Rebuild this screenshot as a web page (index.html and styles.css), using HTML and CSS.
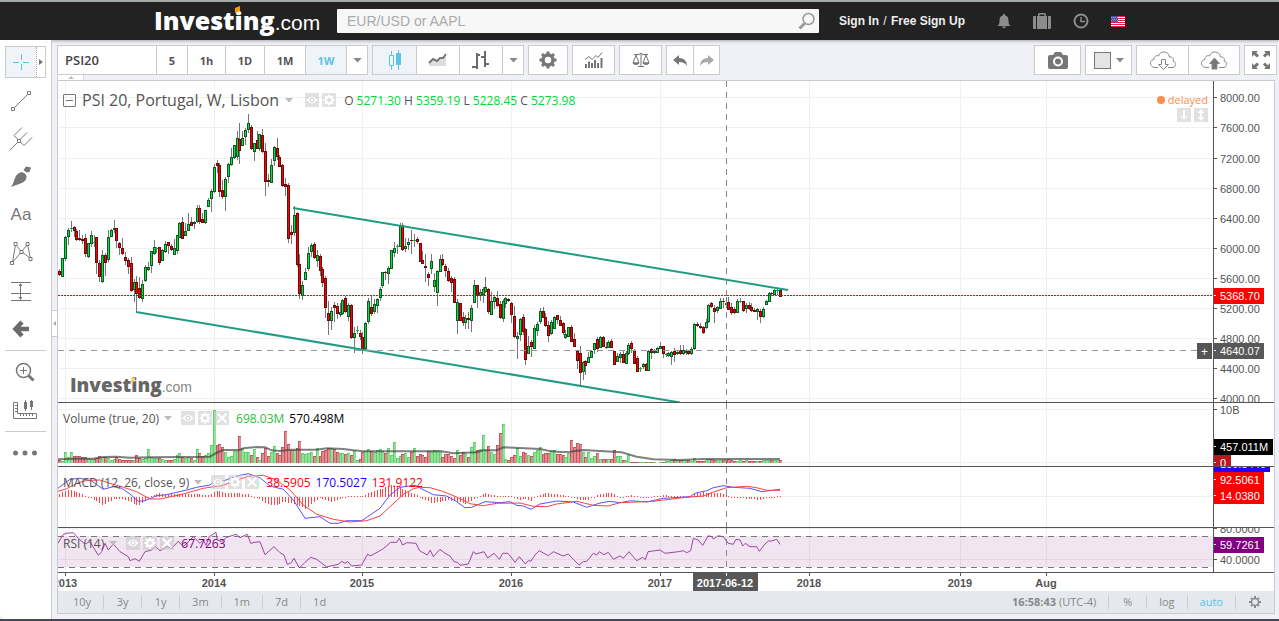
FILE: index.html
```
<!DOCTYPE html>
<html lang="en">
<head>
  <meta charset="UTF-8">
  <meta name="viewport" content="width=device-width, initial-scale=1.0">
  <title>PSI 20 - Investing.com</title>
  <link rel="stylesheet" href="styles.css">
</head>
<body>
  <svg class="symbols" aria-hidden="true">
    <symbol id="eye" viewBox="0 0 14 14"><path d="M1.5 7Q7 0 12.500 7Q7 14 1.500 7z" fill="#fff"/><circle cx="7" cy="7" r="2.600" fill="#ddd"/><circle cx="7" cy="7" r="1.200" fill="#fff"/></symbol>
    <symbol id="cog" viewBox="0 0 14 14"><circle cx="7" cy="7" r="3.200" fill="none" stroke="#fff" stroke-width="2.200"/><path d="M7 1.500v11M1.500 7h11M3.100 3.100l7.800 7.800M10.900 3.100l-7.800 7.800" stroke="#fff" stroke-width="2"/><circle cx="7" cy="7" r="2" fill="#ddd"/></symbol>
    <symbol id="cross" viewBox="0 0 14 14"><path d="M2.500 2.500l9 9M11.500 2.500l-9 9" stroke="#fff" stroke-width="2"/></symbol>
    <symbol id="caret" viewBox="0 0 10 6"><path d="M0 0h10L5 5.500z" fill="currentColor"/></symbol>
  </svg>

  <header class="header">
    <a class="logo" href="#"><span class="logo-name">Investing</span><span class="logo-com">.com</span></a>
    <form class="search-box">
      <input type="text" placeholder="EUR/USD or AAPL" aria-label="Search">
      <button class="search-btn" aria-label="Go">
        <svg width="18" height="18" viewBox="0 0 18 18" fill="none" stroke="#999"><circle cx="10.500" cy="7" r="5.500" stroke-width="1.500"/><path d="M6.500 11.500L1.500 16.500" stroke-width="3"/></svg>
      </button>
    </form>
    <div class="sign-links"><a href="#">Sign In</a><span> / </span><a href="#">Free Sign Up</a></div>
    <nav class="header-icons">
      <a href="#" aria-label="Alerts"><svg width="14" height="16" viewBox="0 0 14 16" fill="#8c8c8c"><path d="M6 1h2v1.500c3 .5 3.500 3 3.500 6 0 2.500 1 3 2 4.500H.5c1-1.500 2-2 2-4.500 0-3 .5-5.500 3.500-6zM5 13.500h4c0 2-4 2-4 0z"/></svg></a>
      <a href="#" aria-label="Portfolio"><svg width="18" height="16" viewBox="0 0 18 16" fill="#8c8c8c"><path d="M1 3h2v13H1a1 1 0 0 1-1-1V4a1 1 0 0 1 1-1zM4 3h1V1.500Q5 0 6.500 0h5Q13 0 13 1.500V3h1v13H4zM6.500 3h5V1.500h-5zM15 3h2a1 1 0 0 1 1 1v11a1 1 0 0 1-1 1h-2z" fill-rule="evenodd"/></svg></a>
      <a href="#" aria-label="Recent"><svg width="16" height="16" viewBox="0 0 16 16" fill="none" stroke="#8c8c8c"><circle cx="8" cy="8" r="6.500" stroke-width="2"/><path d="M8 4v4.500h4" stroke-width="1.500"/></svg></a>
      <a href="#" aria-label="United States"><svg width="14" height="11" viewBox="0 0 14 11"><path fill="#fff" d="M0 0h14v11H0z"/><path stroke="#e0243c" d="M0 .5h14M0 2.500h14M0 4.500h14M0 6.500h14M0 8.500h14M0 10.500h14"/><path fill="#4a4f9c" d="M0 0h7v6H0z"/><path stroke="#c9cbe8" stroke-width=".7" stroke-dasharray="1 1" d="M0 1.500h7M1 3.200h6M0 4.800h7"/></svg></a>
    </nav>
  </header>

  <div class="workspace">
    <aside class="tools">
      <div class="tool-active">
        <button aria-label="Crosshair"><svg width="18" height="18" viewBox="0 0 18 18" stroke="#5bc4e6"><path d="M9.500 1v6M9.500 11v6M1 9.500h6M11 9.500h6"/></svg></button>
        <button class="tool-more" aria-label="Cursors"><svg width="4" height="6" viewBox="0 0 4 6"><path d="M0 0l4 3-4 3z" fill="#777"/></svg></button>
      </div>
      <button aria-label="Trend line"><svg width="22" height="22" viewBox="0 0 22 22" fill="none" stroke="#777"><path d="M3.500 18.500L18.500 3.500"/><path fill="#fff" d="M1.500 17.500h3v3h-3zM17.500 1.500h3v3h-3z"/></svg></button>
      <button aria-label="Pitchfork"><svg width="24" height="24" viewBox="0 0 24 24" fill="none" stroke="#777"><path d="M1 23l9-9M5 8.500l10 10M5 8.500l8-8M10 13.500l8-8M15 18.500l8-8"/><path fill="#fff" d="M8.500 12.500h3v3h-3z"/></svg></button>
      <button aria-label="Brush"><svg width="22" height="22" viewBox="0 0 22 22" fill="#777"><path d="M1 21C5 16 4 9 10 6.500c3-1 7 1.500 6.500 5C16 17 8 18 1 21zM13.500 4l2.500-3.500 5 1-1.500 4.500-3 .5z"/></svg></button>
      <button class="tool-text" aria-label="Text">Aa</button>
      <button aria-label="Pattern"><svg width="24" height="24" viewBox="0 0 24 24" fill="none" stroke="#777"><path d="M3.500 21.500L6.500 3.500l6 7 6-7 3 14-9-7z"/><path fill="#fff" d="M1.500 20.500h3v3h-3zM5 1.500h3v3H5zM11 9.500h3v3h-3zM17 1.500h3v3h-3zM20 16.500h3v3h-3z"/></svg></button>
      <button aria-label="Measure"><svg width="20" height="20" viewBox="0 0 20 20" stroke="#777" fill="#777"><path d="M0 1.500h20M0 12.500h20M0 19.500h20M9.500 3v15" /><path d="M9.500 2l2 3h-4zM9.500 19l2-3h-4z" stroke="none"/></svg></button>
      <button aria-label="Back"><svg width="18" height="18" viewBox="0 0 18 18" fill="none" stroke="#6b6b6b" stroke-width="4.500"><path d="M10 2L3.500 9l6.500 7M4 9h13"/></svg></button>
      <hr>
      <button class="tool-offset" aria-label="Zoom in"><svg width="20" height="20" viewBox="0 0 20 20" fill="none" stroke="#777"><circle cx="8.500" cy="8.500" r="7" stroke-width="1.500"/><path d="M8.500 5v7M5 8.500h7"/><path d="M13.500 13.500l5 5" stroke-width="3"/></svg></button>
      <button class="tool-offset" aria-label="Scale"><svg width="24" height="20" viewBox="0 0 24 20" fill="none" stroke="#777"><path d="M.5 2.500h4v11h19v5H.5zM2 5.500h2.500M2 8.500h2.500M2 11.500h2.500M7.500 16v-2M10.500 16v-2M13.500 16v-2M16.500 16v-2M19.500 16v-2"/><path d="M12.500 0v11M18.500 0v10"/><path fill="#777" stroke="none" d="M11 2h3v7h-3zM17 1h3v6h-3z"/></svg></button>
      <hr>
      <button class="tool-offset" aria-label="More"><svg width="24" height="6" viewBox="0 0 24 6" fill="#777"><circle cx="2.500" cy="3" r="2.500"/><circle cx="12" cy="3" r="2.500"/><circle cx="21.500" cy="3" r="2.500"/></svg></button>
    </aside>

    <main class="content">
      <button class="side-handle" aria-label="Hide tools"><svg width="3" height="5" viewBox="0 0 3 5"><path d="M3 0v5L0 2.500z" fill="#aaa"/></svg></button>
      <div class="toolbar">
        <div class="group">
          <input class="symbol-input" type="text" value="PSI20" aria-label="Symbol">
          <button>5</button>
          <button class="w-hour">1h</button>
          <button class="w-day">1D</button>
          <button class="w-month">1M</button>
          <button class="w-month active">1W</button>
          <button class="w-caret" aria-label="Intervals"><svg width="9" height="5"><use href="#caret"/></svg></button>
        </div>
        <div class="group">
          <button class="w-icon active" aria-label="Candles"><svg width="14" height="20" viewBox="0 0 14 20" stroke="#5bc4e6" fill="none"><path d="M3.500 1v4M3.500 16v4M10.500 0v20"/><path d="M1.500 5.500h4v10h-4z"/><path fill="#5bc4e6" d="M8.500 3.500h4v11h-4z"/></svg></button>
          <button class="w-icon" aria-label="Area"><svg width="20" height="14" viewBox="0 0 20 14"><path fill="#ddd" d="M1 9l5-3 3 2 9-6v11H1z"/><path fill="none" stroke="#777" stroke-width="2" d="M1 10l4-4 4 2 3-3h3l3-4"/></svg></button>
          <button class="w-icon" aria-label="Bars"><svg width="18" height="18" viewBox="0 0 18 18" fill="none" stroke="#6b6b6b" stroke-width="2"><path d="M5 2v16M0 16h5M5 4h3M13 0v16M9 6h4M13 13h4"/></svg></button>
          <button class="w-caret" aria-label="Chart types"><svg width="9" height="5"><use href="#caret"/></svg></button>
        </div>
        <div class="group">
          <button class="w-gear" aria-label="Properties"><svg width="18" height="18" viewBox="0 0 18 18" fill="none" stroke="#777"><circle cx="9" cy="9" r="5" stroke-width="3.500"/><path stroke-width="3" d="M9 .5v3M9 14.500v3M.5 9h3M14.500 9h3M3 3l2 2M13 13l2 2M15 3l-2 2M5 13l-2 2"/></svg></button>
        </div>
        <div class="group">
          <button class="w-wide" aria-label="Indicators"><svg width="18" height="16" viewBox="0 0 18 16" fill="none" stroke="#777"><path stroke-width="2" d="M1 16v-4M4 16V9.500M7 16v-5M10 16V8M13 16v-5M16.500 16V6"/><path d="M0 7.500l4-3 3 3 4-4 2 2 4-5"/></svg></button>
        </div>
        <div class="group">
          <button class="w-wide" aria-label="Compare"><svg width="18" height="16" viewBox="0 0 18 16" fill="none" stroke="#777"><path d="M2 2.500h5M11 2.500h5M7 2.500l2-1.500 2 1.500M9 2v12M6 14.500h6M4 3L1 11h6L4 3zM14 3l-3 8h6l-3-8z"/><path fill="#777" d="M1 11c1 2 5 2 6 0zM11 11c1 2 5 2 6 0z"/></svg></button>
        </div>
        <div class="group">
          <button class="w-undo" aria-label="Undo"><svg width="14" height="11" viewBox="0 0 14 11" fill="#777"><path d="M0 5l6-5v3c5 0 8 3 8 8-2-3-4-4-8-4v3z"/></svg></button>
          <button class="w-undo" aria-label="Redo"><svg width="14" height="11" viewBox="0 0 14 11" fill="#aaa"><path d="M14 5L8 0v3C3 3 0 6 0 11c2-3 4-4 8-4v3z"/></svg></button>
        </div>
        <div class="group push">
          <button class="w-camera" aria-label="Snapshot"><svg width="20" height="17" viewBox="0 0 20 17"><path fill="#777" d="M2 3h3l2-3h6l2 3h3a2 2 0 0 1 2 2v10a2 2 0 0 1-2 2H2a2 2 0 0 1-2-2V5a2 2 0 0 1 2-2z"/><circle cx="10" cy="9.500" r="4" fill="#777" stroke="#fff" stroke-width="2"/></svg></button>
        </div>
        <div class="group">
          <button class="w-camera layout-btn" aria-label="Layout"><span class="swatch"></span><svg width="8" height="5"><use href="#caret"/></svg></button>
        </div>
        <div class="group">
          <button class="w-cloud" aria-label="Load"><svg width="28" height="20" viewBox="0 0 28 20" fill="none" stroke="#888"><path d="M9 17.500H6C0 17 0 10 5 9.500 5 6 8 5 9.500 6 11 0 20 1 20.500 7 24 6.500 25 9 24 11c4 1 3 6 0 6.500h-5"/><path d="M12.500 9.500h4v5h3l-5 5-5-5h3z"/></svg></button>
          <button class="w-cloud" aria-label="Save"><svg width="28" height="20" viewBox="0 0 28 20" fill="none" stroke="#888"><path d="M9 17.500H6C0 17 0 10 5 9.500 5 6 8 5 9.500 6 11 0 20 1 20.500 7 24 6.500 25 9 24 11c4 1 3 6 0 6.500h-5"/><path fill="#777" d="M12 19v-5.500H9.500l5-5.500 5 5.500H17V19z"/></svg></button>
        </div>
        <div class="group">
          <button class="w-full" aria-label="Fullscreen"><svg width="18" height="18" viewBox="0 0 18 18" fill="#777"><path d="M0 0h6L4.300 1.700 7 4.500 5 6.500 2 3.800 0 6zM18 0v6l-2-2.200-3 2.700-2-2L13.700 1.700 12 0zM0 18v-6l2 2.200 3-2.700 2 2-2.700 2.800L6 18zM18 18h-6l1.700-1.700-2.700-2.800 2-2 3 2.700 2-2.200z"/></svg></button>
        </div>
        <button class="fold" aria-label="Hide toolbar"><svg width="6" height="3" viewBox="0 0 6 3"><path d="M3 0l3 3H0z" fill="#bbb"/></svg></button>
      </div>

      <section class="chart">
        <div class="pane pane-price">
          <div class="plot">
            <svg id="price"></svg>
            <div class="legend legend-main">
              <button class="minus" aria-label="Collapse"></button>
              <h1>PSI 20, Portugal, W, Lisbon</h1>
              <svg class="legend-caret" width="8" height="5"><use href="#caret"/></svg>
              <span class="chips"><svg><use href="#eye"/></svg><svg><use href="#cog"/></svg></span>
              <span class="ohlc">O <b>5271.30</b> H <b>5359.19</b> L <b>5228.45</b> C <b>5273.98</b></span>
            </div>
            <div class="delayed">
              <span>delayed</span>
              <div class="chips">
                <svg viewBox="0 0 14 14"><path d="M7 2v7" stroke="#fff" stroke-width="2"/><path d="M3.500 8h7L7 12z" fill="#fff"/></svg>
                <svg viewBox="0 0 14 14"><path d="M7 3v8" stroke="#fff" stroke-width="2"/><path d="M3.500 5h7L7 1zM3.500 9h7L7 13z" fill="#fff"/></svg>
              </div>
            </div>
            <div class="watermark"><span class="logo-name">Investing</span><span class="logo-com">.com</span></div>
            <button class="add-alert" aria-label="Add alert">+</button>
          </div>
          <svg class="axis" id="price-axis"></svg>
        </div>
        <div class="pane pane-volume">
          <div class="plot">
            <svg id="volume"></svg>
            <div class="legend">
              <h2>Volume (true, 20)</h2>
              <svg class="legend-caret" width="8" height="5"><use href="#caret"/></svg>
              <span class="chips"><svg><use href="#eye"/></svg><svg><use href="#cog"/></svg><svg><use href="#cross"/></svg></span>
              <span class="up">698.03M</span><span class="black">570.498M</span>
            </div>
          </div>
          <svg class="axis" id="volume-axis"></svg>
        </div>
        <div class="pane pane-macd">
          <div class="plot">
            <svg id="macd"></svg>
            <div class="legend">
              <h2>MACD (12, 26, close, 9)</h2>
              <svg class="legend-caret" width="8" height="5"><use href="#caret"/></svg>
              <span class="chips"><svg><use href="#eye"/></svg><svg><use href="#cog"/></svg><svg><use href="#cross"/></svg></span>
              <span class="red">38.5905</span><span class="blue">170.5027</span><span class="red">131.9122</span>
            </div>
          </div>
          <svg class="axis" id="macd-axis"></svg>
        </div>
        <div class="pane pane-rsi">
          <div class="plot">
            <svg id="rsi"></svg>
            <div class="legend">
              <h2>RSI (14)</h2>
              <svg class="legend-caret" width="8" height="5"><use href="#caret"/></svg>
              <span class="chips"><svg><use href="#eye"/></svg><svg><use href="#cog"/></svg><svg><use href="#cross"/></svg></span>
              <span class="purple">67.7263</span>
            </div>
          </div>
          <svg class="axis" id="rsi-axis"></svg>
        </div>
        <svg class="time-axis" id="time"></svg>
        <div class="bottom-bar">
          <button>10y</button><button>3y</button><button>1y</button><button>3m</button><button>1m</button><button>7d</button><button>1d</button>
          <span class="clock"><b>16:58:43</b> (UTC-4)</span>
          <button>%</button><button>log</button><button class="active">auto</button>
          <button aria-label="Scale settings"><svg width="12" height="12" viewBox="0 0 12 12" fill="none" stroke="#888"><circle cx="6" cy="6" r="3.500" stroke-width="1.500"/><path stroke-width="2" d="M6 0v2M6 10v2M0 6h2M10 6h2M2 2l1 1M9 9l1 1M10 2L9 3M3 9l-1 1"/></svg></button>
        </div>
      </section>
    </main>
  </div>
  <script src="chart.js"></script>
</body>
</html>
```
FILE: styles.css
```
* {
  margin: 0;
  padding: 0;
  box-sizing: border-box;
}

body {
  display: flex;
  flex-direction: column;
  min-height: 100vh;
  background-color: #f0f1f6;
  border-top: 2px solid #a3aaa8;
  border-bottom: 2px solid #444857;
  font-family: "Open Sans", "Noto Sans", sans-serif;
  font-size: 12px;
  color: #555;
}

button, input {
  font: inherit;
  color: inherit;
  border: none;
  background: none;
}

button {
  display: flex;
  align-items: center;
  justify-content: center;
  cursor: pointer;
}

a {
  color: inherit;
  text-decoration: none;
}

svg {
  display: block;
  flex-shrink: 0;
}

.symbols {
  position: absolute;
  width: 0;
  height: 0;
}

/* header */
.header {
  display: flex;
  align-items: center;
  height: 38px;
  padding-left: 154px;
  background-color: #222;
  color: #eee;
  box-shadow: 0 1px 3px rgba(0, 0, 0, 0.3);
}

.logo {
  display: flex;
  align-items: baseline;
  width: 183px;
  color: #fff;
  line-height: 34px;
}

.logo-name {
  position: relative;
  font-size: 25px;
  font-weight: 800;
}

.logo-name::after {
  content: "";
  position: absolute;
  left: 67%;
  top: 14%;
  width: 5px;
  height: 5px;
  background-color: #f90;
  transform: skewY(-20deg);
}

.logo-com {
  font-family: "Liberation Sans", Arial, sans-serif;
  font-size: 21px;
}

.search-box {
  display: flex;
  align-items: center;
  width: 482px;
  height: 24px;
  padding-right: 3px;
  background-color: #f7f7f7;
  border-radius: 1px;
}

.search-box input {
  flex: 1;
  padding-left: 10px;
  font-family: "Liberation Sans", Arial, sans-serif;
  font-size: 14px;
  outline: none;
}

.search-box input::placeholder {
  color: #aaa;
}

.sign-links {
  display: flex;
  gap: 1px;
  margin-left: 20px;
  font-family: "Liberation Sans", Arial, sans-serif;
  font-size: 12px;
  font-weight: bold;
  white-space: pre;
}

.sign-links span {
  font-weight: normal;
}

.header-icons {
  display: flex;
  align-items: center;
  gap: 22px;
  margin-left: 32px;
}

/* left tools */
.workspace {
  display: flex;
  flex: 1;
}

.tools {
  display: flex;
  flex-direction: column;
  width: 52px;
  padding: 6px 5px 0;
  background-color: #fff;
  border-right: 1px solid #c9cbd1;
  border-bottom-left-radius: 6px;
}

.tools button {
  width: 32px;
  height: 38px;
}

.tools .tool-active {
  display: flex;
  height: 32px;
  margin-bottom: 4px;
  border: 1px solid #c9cbcd;
}

.tool-active button {
  height: 30px;
  background-color: #f0f4f8;
}

.tools .tool-more {
  width: 9px;
  background-color: #fff;
  border-left: 1px dotted #aaa;
}

.tools .tool-text {
  font-family: "Liberation Sans", Arial, sans-serif;
  font-size: 17px;
  color: #777;
}

.tools .tool-offset {
  margin-left: 4px;
}

.tools hr {
  margin: 2px 0;
  border: none;
  border-top: 1px solid #ccc;
}

/* toolbar */
.content {
  display: flex;
  flex: 1;
  flex-direction: column;
  min-width: 0;
  padding: 5px 4px 5px 5px;
  position: relative;
}

.side-handle {
  position: absolute;
  left: 0;
  top: 270px;
  width: 5px;
  height: 27px;
  background-color: #fff;
  border: solid #c9cbd1;
  border-width: 1px 0;
}

.toolbar {
  display: flex;
  gap: 4px;
  margin: 0 -2px 5px 0;
  position: relative;
}

.group {
  display: flex;
  height: 30px;
  background-color: #fff;
  border: 1px solid #c9cbcd;
}

.group button {
  width: 31px;
  font-size: 11px;
  font-weight: 700;
}

.group button + button,
.symbol-input + button {
  border-left: 1px solid #c9cbcd;
}

.group .symbol-input {
  width: 98px;
  padding-left: 7px;
  font-size: 13px;
  font-weight: 600;
  color: #444;
}

.group .w-hour { width: 38px; }
.group .w-day { width: 39px; }
.group .w-month { width: 41px; }
.group .w-icon { width: 43px; }
.group .w-caret { width: 21px; color: #888; }
.group .w-gear { width: 38px; }
.group .w-wide { width: 41px; }
.group .w-camera { width: 45px; }
.group .w-undo { width: 26px; }
.group .w-cloud { width: 51px; }
.group .w-full { width: 31px; }

.group .active {
  background-color: #f0f4f8;
  color: #5bc4e6;
}

.push {
  margin-left: auto;
}

.layout-btn {
  gap: 5px;
  color: #888;
}

.swatch {
  width: 17px;
  height: 17px;
  background-color: #e4e4e4;
  border: 1px solid #777;
}

.fold {
  position: absolute;
  left: 0;
  top: 30px;
  width: 27px;
  height: 5px;
  background-color: #fff;
  border: solid #d3d5da;
  border-width: 0 1px;
}

/* chart */
.chart {
  display: flex;
  flex: 1;
  flex-direction: column;
  background-color: #fff;
  border: 1px solid #c9cbcd;
}

.pane {
  display: flex;
  border-bottom: 1px solid #555;
}

.pane-price {
  flex: 1;
  min-height: 322px;
}

.pane-volume { height: 64px; }
.pane-macd { height: 61px; }
.pane-rsi { height: 45px; }

.plot {
  flex: 1;
  min-width: 0;
  position: relative;
  overflow: hidden;
}

.plot > svg {
  position: absolute;
  width: 100%;
  height: 100%;
}

.axis {
  width: 61px;
  height: auto;
  border-left: 1px solid #555;
  overflow: hidden;
}

.axis text,
.time-axis text {
  font-family: "Liberation Sans", Arial, sans-serif;
  font-size: 11px;
  fill: #555;
}

.axis .badge-text,
.time-axis .badge-text {
  fill: #fff;
}

.time-axis {
  width: 100%;
  height: 18px;
  overflow: hidden;
}

.time-axis text {
  font-weight: bold;
  text-anchor: middle;
}

.legend {
  position: absolute;
  left: 5px;
  top: 7px;
  display: flex;
  align-items: center;
  gap: 5px;
  height: 16px;
  white-space: nowrap;
}

.legend h1 {
  font-size: 16px;
  font-weight: normal;
}

.legend h2 {
  font-size: 12px;
  font-weight: normal;
}

.legend-main {
  top: 10px;
  gap: 6px;
  height: 18px;
}

.legend-caret {
  color: #bbb;
}

.minus {
  width: 13px;
  height: 13px;
  background: linear-gradient(#777, #777) center / 7px 1px no-repeat;
  border: 1px solid #777;
  border-radius: 1px;
}

.chips {
  display: flex;
  gap: 3px;
  margin: 0 2px 0 4px;
}

.legend-main .chips {
  margin-left: 6px;
}

.chips svg {
  width: 14px;
  height: 14px;
  background-color: rgba(200, 200, 200, 0.55);
}

.ohlc b {
  font-weight: normal;
  color: #00d936;
}

.up { color: #2ebd3d; }
.black { color: #000; }
.red { color: #f00; }
.blue { color: #20f; }
.purple { color: #800080; }

.delayed {
  position: absolute;
  right: 5px;
  top: 11px;
  display: flex;
  flex-direction: column;
  align-items: flex-end;
  font-size: 11px;
  line-height: 16px;
  color: #ff8c4a;
}

.delayed span::before {
  content: "";
  display: inline-block;
  width: 8px;
  height: 8px;
  margin-right: 3px;
  background-color: #ff8c4a;
  border-radius: 50%;
}

.delayed .chips {
  margin: 0;
}

.watermark {
  position: absolute;
  left: 12px;
  bottom: 4px;
  display: flex;
  align-items: baseline;
  color: #666;
}

.watermark .logo-name {
  font-size: 19px;
}

.watermark .logo-name::after {
  top: 22%;
  width: 4px;
  height: 4px;
  background-color: #fc6;
}

.watermark .logo-com {
  font-size: 14px;
  color: #888;
}

.add-alert {
  position: absolute;
  right: 1px;
  top: 262px;
  width: 15px;
  height: 16px;
  background-color: #555;
  color: #fff;
}

/* bottom bar */
.bottom-bar {
  display: flex;
  align-items: center;
  height: 22px;
  padding: 0 1px 1px 3px;
  background-color: #e5e8ec;
  font-size: 11px;
  color: #888;
}

.bottom-bar button {
  height: 14px;
  min-width: 38px;
  padding: 0 12px;
}

.bottom-bar button + button {
  border-left: 1px solid #cbced3;
}

.clock {
  margin-left: auto;
  padding-right: 12px;
}

.clock b {
  font-weight: 700;
}

.clock + button {
  border-left: 1px solid #cbced3;
}

.bottom-bar .active {
  color: #5bc4e6;
}
```
FILE: chart.js
```
// Rows are "high top bottom low" plus g/r, in thirds of a pixel below `top`.
const CANDLES = [
  { top: 100, rows: `
508 513 525 528 r,474 475 530 530 g,408 412 476 482 g,384 391 411 435 g,363 385 388 395 g,378 382 392 412 r,387 392 419 424 r,
391 415 419 424 r,405 418 422 432 r,402 415 461 472 r,430 430 470 474 g,393 406 432 440 g,404 427 430 440 g,411 411 489 521 r,
480 489 530 545 r,450 465 545 548 g,460 465 489 527 r,390 411 480 486 g,388 391 411 411 g,360 385 391 398 g,384 385 422 445 r,
426 430 443 465 r,414 443 462 465 r,455 472 483 496 r,474 481 500 523 r,470 489 572 575 r,538 547 570 605 g,528 547 582 640 r,
531 563 594 596 r,540 553 597 605 g,495 502 543 545 g,486 500 510 514 g,452 454 498 520 g,420 442 461 465 g,441 443 446 460 g,
441 442 490 495 r,447 451 482 482 g,423 433 456 460 g,425 427 438 462 r,432 438 450 452 r,417 443 465 465 g,405 406 452 462 g,
366 370 413 413 g,351 367 416 416 r,370 394 407 407 g,340 373 392 392 g,351 366 377 378 r,362 366 373 387 g,315 324 365 370 g,
315 325 367 372 r,340 357 368 368 r,330 331 370 372 g,294 301 320 320 g,267 274 297 336 g,192 202 275 280 g,180 190 198 220 r,
190 196 275 290 r,240 270 290 298 r,232 238 290 333 g,190 193 231 248 g,143 170 195 198 g,135 136 173 176 g,94 115 170 180 g,
69 118 152 192 r,94 115 137 138 g,84 91 110 134 g,42 70 90 98 g,74 82 147 149 r,130 130 156 182 g,93 121 147 148 r,
102 103 146 154 g,88 106 155 160 r,129 153 245 288 r,222 241 246 260 r,178 196 248 248 g,138 142 182 197 g,114 145 171 180 r,
166 171 200 202 r,192 196 257 262 r,234 252 261 288 r,250 256 416 428 r` },
  { top: 130, rows: `
285 306 315 343 r,228 255 309 318 g,246 250 404 410 r,372 403 491 507 r,452 465 497 510 g,415 427 450 450 g,352 370 416 422 g,
340 345 365 382 g,336 343 383 386 r,360 375 392 412 g,372 379 422 438 r,410 418 458 470 r,438 445 533 564 r,512 549 573 615 r,
530 543 573 600 g,516 525 533 575 r,520 529 552 568 r,520 546 555 560 g,507 511 553 555 g,498 505 545 550 r,518 525 560 572 g,
522 525 625 627 r,591 609 624 669 g,588 601 604 612 g,600 610 620 630 r,607 620 657 671 r,577 580 657 660 g,504 514 575 582 g,
498 531 551 558 r,508 522 545 552 g,505 507 528 550 g,472 478 503 512 g,425 427 467 475 g,422 426 429 450 r,408 415 433 462 g,
360 361 416 416 g,336 354 369 382 g,342 348 351 372 g,279 289 350 350 g,279 286 360 362 r,324 348 358 366 g,324 336 346 360 g,
300 330 333 372 r,312 330 333 350 g,322 328 336 342 r,339 340 395 396 r` },
  { top: 200, rows: `
153 181 191 193 r,162 198 203 246 r,216 222 234 257 r,162 184 207 222 g,219 240 261 276 g,210 213 279 318 g,165 178 215 216 g,
162 178 195 198 r,192 198 213 231 r,204 213 243 245 r,228 234 248 276 r,231 237 308 309 r,297 306 362 402 g,309 310 362 363 r,
336 351 369 378 r,345 355 369 387 g,336 354 359 387 r,315 325 362 396 g,240 256 308 309 g,255 256 288 324 r,267 276 287 303 g,
260 268 285 310 g,231 262 277 280 g,264 268 335 342 r,276 304 344 345 g,285 292 305 326 g,273 294 317 320 r,304 313 353 357 r,
297 304 356 366 g,290 295 311 325 g,293 297 303 307 r,305 309 345 369 r,318 349 410 415 r,396 408 416 477 g,355 358 404 424 g,
342 352 395 405 r,384 388 480 495 r,408 438 461 462 g,420 426 440 471 r,375 385 446 448 g,366 373 392 408 g,324 334 365 372 g,
321 334 353 354 r,338 352 377 380 r,363 376 407 426 r,360 366 402 405 g,348 352 386 388 g,345 346 361 372 r,348 360 377 378 r,
366 370 399 404 r,390 402 413 417 g,380 382 411 411 g,375 382 425 426 r,399 418 440 442 r,450 452 483 507 r,438 460 518 558 r,
483 487 516 540 g,480 484 497 525 r,456 470 488 489 g,450 452 473 474 g,428 430 450 462 g,411 418 446 456 r,408 412 443 444 g,
408 412 441 442 r,426 440 444 446 r,420 427 443 444 g,417 424 443 444 r,453 454 494 495 r,459 469 486 487 g,455 463 475 488 g,
454 462 488 489 r,454 458 491 492 g,430 436 461 465 g,424 430 446 460 r,447 450 491 492 r,468 475 515 516 r,501 504 507 516 g,
489 492 500 508 g,490 492 512 513 r,450 454 512 513 g,445 448 460 478 r,447 454 458 462 g,441 444 459 460 g,426 438 446 446 g,
438 439 462 474 r,460 462 465 470 g,456 459 468 472 g,453 456 471 495 g,444 454 466 486 r,450 456 461 466 g` },
  { top: 240, rows: `
315 330 342 345 r,315 330 342 346 g,327 333 340 345 g,332 333 341 345 r,321 328 341 345 g,248 251 328 330 g,246 252 258 262 r,
250 259 263 266 r,258 260 280 281 r,237 245 265 267 g,192 196 247 249 g,186 190 201 204 r,196 204 215 249 r,198 202 213 218 g,
174 182 206 208 g,174 183 186 204 r,171 190 194 204 g,171 186 209 210 r,190 202 219 225 r,200 206 218 222 r,178 184 218 220 g,
174 182 187 190 g,182 184 214 215 r,190 195 208 219 g,186 195 208 210 r,189 202 213 216 r,204 211 215 217 r,205 208 217 240 g,
208 213 230 249 r,201 208 231 234 g,180 184 194 195 g,157 160 185 186 g,156 158 163 168 r,146 149 164 165 g,146 150 153 165 g,
148 151 170 171 r` },
];

// bar tops, in thirds of a pixel below y = 400
const VOLUME = `180 183 157 171 157 168 168 169 171 172 175 178 177 174 168 170 171 175 180 178 172 176 180 181 181 181 179 166
173 177 173 148 172 174 175 174 178 181 181 181 178 166 160 171 174 172 175 179 148 160 167 165 160 136 30 135 132 142 155 172
168 154 152 108 143 155 157 165 148 172 180 160 145 168 156 137 160 166 142 94 132 150 151 143 122 160 163 160 157 168 143
168 152 150 145 145 148 157 160 160 163 160 165 150 180 178 155 152 148 153 155 150 148 152 160 145 165 127 175 168 163 160
170 155 145 168 163 166 170 154 155 151 152 155 170 163 163 168 175 151 166 155 163 172 142 127 150 148 106 150 139 155 163
136 100 73 178 179 170 165 143 168 156 158 166 167 157 151 142 163 160 160 152 151 163 163 166 172 160 121 140 130 133 155
170 157 175 168 160 178 178 178 178 178 151 168 169 180 180 166 187 187 187 187 187 187 187 187 187 189 187 187 184 183 181
178 180 181 180 181 181 182 175 182 184 183 181 178 177 179 180 179 180 178 177 181 182 183 181 182 180 183 182 184 184 182
180 180 179 180 180 181 179 188`.split(/\s+/).map(Number);

// line points are "x,y" in thirds of a pixel; the second part starts at x = 420
const VOLUME_MA = [
  '24,178 80,176 130,176 160,171 200,170 240,173 300,172 480,170 500,158 520,150 570,150 580,145 620,141 645,142 665,151 690,153 720,149 800,149 830,145 880,147 910,151 940,154 1109,154',
  '0,154 60,153 100,160 170,157 190,151 230,151 250,142 300,144 360,147 385,152 420,156 450,155 490,150 540,153 605,157 650,170 700,178 780,180 850,177 1080,177'];
const MACD = [
  '24,265 60,238 90,235 125,243 160,268 190,260 215,265 240,282 265,304 285,302 320,287 350,284 410,270 440,262 480,255 497,240 520,243 560,228 595,221 630,233 660,258 700,268 730,300 765,355 810,350 840,370 865,370 890,362 935,362 990,325 1020,285 1050,262 1095,256',
  '0,264 40,284 80,288 110,305 135,323 155,322 195,305 240,308 270,305 290,316 310,318 333,328 360,312 410,303 460,306 500,322 540,309 570,304 600,308 632,302 680,306 730,295 810,290 825,280 860,272 880,263 910,257 940,262 990,265 1025,275 1080,268'];
const SIGNAL = [
  '24,274 50,266 80,250 110,241 150,240 180,250 220,262 260,275 300,297 330,297 400,282 460,265 520,256 560,240 600,228 640,226 680,240 720,270 760,315 800,343 850,358 900,366 950,362 990,348 1020,320 1060,283 1090,266',
  '0,262 30,263 65,273 110,291 150,311 190,317 230,310 300,309 340,319 380,320 410,312 470,304 520,316 565,318 600,308 700,304 730,300 800,292 850,288 880,276 920,263 980,259 1010,263 1040,271 1080,271'];
const RSI = [
  '24,430 38,405 48,400 70,398 85,415 105,432 120,425 145,466 155,455 165,430 175,450 190,432 210,455 235,470 240,482 255,476 268,484 285,455 305,450 315,438 330,452 350,440 365,445 385,424 400,440 430,410 450,430 460,420 468,436 478,410 498,397 502,420 515,425 530,412 558,403 570,413 592,403 602,430 615,427 630,425 645,464 672,440 690,458 702,465 712,493 722,490 732,475 748,504 765,487 782,472 800,478 830,501 865,493 875,484 885,490 893,485 905,498 935,495 953,462 960,468 985,455 1000,446 1022,427 1040,427 1048,415 1058,435 1070,428 1098,430 1108,450',
  '0,453 22,465 31,450 40,470 60,448 75,460 90,468 102,485 112,487 120,496 145,492 160,455 168,462 192,455 203,474 222,460 238,478 248,460 264,460 285,487 298,470 316,492 325,482 333,483 345,465 358,452 385,467 400,455 430,468 445,462 460,478 477,495 490,485 500,484 520,460 530,465 538,455 552,464 565,457 580,478 600,468 610,475 627,455 650,482 668,472 676,479 684,455 720,450 735,460 775,455 790,452 800,458 812,452 820,415 835,420 848,436 865,407 875,410 880,417 895,407 910,410 925,430 940,433 948,418 960,420 968,438 976,430 990,440 1010,440 1018,454 1035,432 1045,423 1055,423 1070,418 1080,433'];

const YEARS = [[65, '2013'], [214, '2014'], [362, '2015'], [511, '2016'], [660, '2017'], [809, '2018'], [960, '2019'], [1046, 'Aug']];
const LEFT = 58;

const rect = (x, y, w, h, fill) => `<rect x="${x}" y="${y}" width="${w}" height="${h}" fill="${fill}"/>`;
const barX = i => Math.floor(59.75 + 2.86 * i);

function points(parts) {
  return parts.flatMap((part, n) => part.split(' ').map(p => {
    const [x, y] = p.split(',').map(Number);
    return [(n ? 420 : 50) + x / 3, 400 + y / 3];
  }));
}

function line(pts, color, width) {
  const d = pts.map(p => p.map(v => v.toFixed(1)).join(',')).join(' ');
  return `<polyline points="${d}" fill="none" stroke="${color}" stroke-width="${width}"/>`;
}

function valueAt(pts, x) {
  const i = Math.max(1, pts.findIndex(p => p[0] >= x));
  const [a, b] = [pts[i - 1], pts[i]];
  return a[1] + (b[1] - a[1]) * (x - a[0]) / (b[0] - a[0]);
}

function hline(y, color, dash) {
  return `<line x1="${LEFT}" x2="5000" y1="${y + 0.5}" y2="${y + 0.5}" stroke="${color}" stroke-dasharray="${dash || 'none'}"/>`;
}

function drawPane(id, top, gridRows, body) {
  const grid = YEARS.map(([x]) => rect(x, top, 1, 1000, '#f0f0f0')).join('') +
    gridRows.map(y => hline(y, '#f0f0f0')).join('');
  const cross = `<line x1="726.5" x2="726.5" y1="${top}" y2="1000" stroke="#888" stroke-dasharray="6 5"/>`;
  document.getElementById(id).innerHTML =
    `<g transform="translate(${-LEFT} ${-top})">${grid}${body}${cross}</g>`;
}

function drawAxis(id, top, labels, badges) {
  const text = (y, s, cls) => `<text x="1220" y="${y + 4}" class="${cls}">${s}</text>`;
  document.getElementById(id).innerHTML = `<g transform="translate(-1214 ${-top})">` +
    labels.map(([y, s]) => rect(1214, y - 1, 3, 1, '#555') + text(y, s, '')).join('') +
    badges.map(([y, s, w, c]) => rect(1214, y - 8, w, 16, c) + rect(1214, y - 1, 2, 1, '#fff') + text(y, s, 'badge-text')).join('') +
    '</g>';
}

// price
const candles = CANDLES.flatMap(({ top, rows }) => rows.trim().split(/,\s*/).map(row => {
  const v = row.split(' ');
  return { y: v.slice(0, 4).map(n => Math.round(top + n / 3)), up: v[4] === 'g' };
}));
const sticks = candles.map(({ y: [high, top, bottom, low], up }, i) => {
  const x = barX(i);
  const h = Math.max(1, bottom - top);
  let out = rect(x, high, 1, low - high, '#777');
  if (h < 2) return out + rect(x - 1, top, 3, 1, up ? '#00b82b' : '#7a1010');
  out += rect(x - 1, top, 3, h, up ? '#12552a' : '#6a0b0b');
  return out + rect(x, top + 1, 1, h - 2, up ? '#00e636' : '#f00');
}).join('');
const priceRows = [97, 127, 158, 188, 218, 248, 278, 308, 338, 368, 398];
drawPane('price', 81, priceRows,
  `<g shape-rendering="crispEdges">${sticks}</g>` +
  line([[293, 208], [788, 290]], '#1f9d84', 2) + line([[136, 312], [680, 402.5]], '#1f9d84', 2) +
  hline(295, '#d01010', '2 1') + hline(350, '#999', '6 5'));
drawAxis('price-axis', 81, priceRows.map((y, i) => [y + 1, (8000 - 400 * i).toFixed(2)]),
  [[296, '5368.70', 50, '#f00'], [351, '4640.07', 50, '#585858']]);

// volume
const bars = VOLUME.slice(0, candles.length).map((v, i) => {
  const y = Math.round(400 + v / 3);
  const up = candles[i].up;
  return rect(barX(i) - 1, y, 3, 463 - y, up ? '#5fcf6c' : '#c9545c') +
    (463 - y > 1 ? rect(barX(i), y + 1, 2, 462 - y, up ? '#93e09b' : '#dc8f93') : '');
}).join('');
drawPane('volume', 403, [409, 462], `<g shape-rendering="crispEdges">${bars}</g>` +
  line(points(VOLUME_MA), 'rgba(60, 60, 60, 0.65)', 2));
drawAxis('volume-axis', 403, [[410, '10B']], [[447, '457.011M', 59, '#000'], [463, '0', 17, '#b8181f']]);

// macd
const macd = points(MACD);
const signal = points(SIGNAL);
const histogram = candles.map((c, i) => {
  const x = Math.min(barX(i), 779);
  const diff = Math.round(valueAt(macd, x) - valueAt(signal, x));
  const h = Math.max(1, Math.abs(diff));
  return rect(barX(i), diff < 0 ? 497 - h : 497, 1, h, '#ff4545');
}).join('');
drawPane('macd', 467, [496], histogram + line(macd, '#5a50ff', 1) + line(signal, '#ff4040', 1));
drawAxis('macd-axis', 467, [], [[464, '169.8446', 56, '#20f'], [480, '92.5061', 50, '#f00'], [496, '14.0380', 50, '#f00']]);

// rsi
drawPane('rsi', 528, [528, 559], rect(LEFT, 536, 5000, 31, 'rgba(128, 0, 128, 0.1)') +
  hline(536, '#777', '6 5') + hline(567, '#777', '6 5') + line(points(RSI), '#a044a0', 1));
drawAxis('rsi-axis', 528, [[529, '80.0000'], [560, '40.0000']], [[545, '59.7261', 50, '#800080']]);

// time scale
document.getElementById('time').innerHTML = `<g transform="translate(${-LEFT} -573)">` +
  YEARS.map(([x, s]) => rect(x, 573, 1, 3, '#555') + `<text x="${x}" y="587">${s}</text>`).join('') +
  rect(693, 573, 65, 18, '#585858') + rect(726, 573, 1, 3, '#fff') +
  '<text x="725" y="587" class="badge-text">2017-06-12</text></g>';
```
